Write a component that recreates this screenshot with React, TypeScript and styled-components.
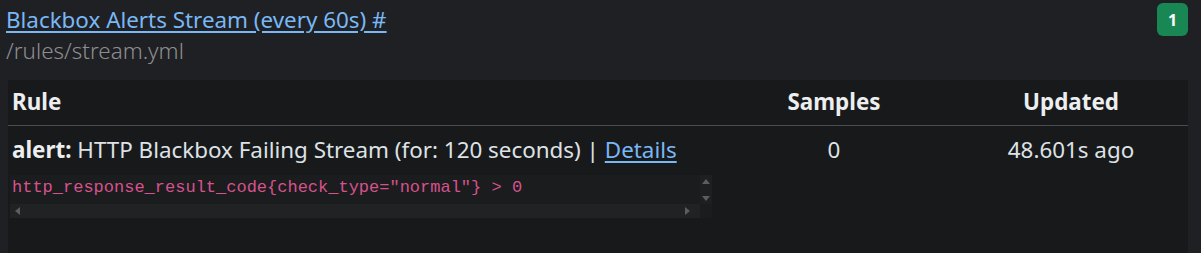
import React from "react";
import styled, { createGlobalStyle } from "styled-components";

const GlobalStyle = createGlobalStyle`
  html, body {
    margin: 0;
    padding: 0;
    background: #1f2023;
    color: #dee2e6;
    font-family: "Noto Sans", "Open Sans", sans-serif;
  }
`;

const Page = styled.div`
  padding: 0 13px 0 6px;
  height: 253px;
  overflow: hidden;
`;

const GroupHeader = styled.div`
  display: flex;
  justify-content: space-between;
  align-items: flex-start;
`;

const TitleBlock = styled.div`
  display: flex;
  flex-direction: column;
  padding-top: 5px;
`;

const TitleLink = styled.a`
  color: #79b8f5;
  font-size: 22.4px;
  line-height: 30px;
  text-decoration: underline;
  text-underline-offset: 3px;
`;

const FilePath = styled.span`
  color: #8d8e90;
  font-size: 22.4px;
  font-weight: 300;
  line-height: 32px;
`;

const Badge = styled.span`
  margin-top: 3px;
  width: 31px;
  height: 33px;
  border-radius: 6px;
  background: #198754;
  color: #fff;
  font-weight: 700;
  font-size: 16px;
  display: flex;
  align-items: center;
  justify-content: center;
`;

const Table = styled.div`
  margin: 13px 0 0 2px;
  background: #18191b;
  min-height: 180px;
`;

const Row = styled.div<{ $head?: boolean }>`
  display: grid;
  grid-template-columns: 706px 240px 1fr;
  border-bottom: ${(p) => (p.$head ? "1px solid #4a4c50" : "none")};
  align-items: start;
`;

const Cell = styled.div<{ $center?: boolean; $head?: boolean }>`
  padding: ${(p) => (p.$head ? "7px 4px 8px" : "9px 4px 6px")};
  text-align: ${(p) => (p.$center ? "center" : "left")};
  font-size: 22.4px;
  line-height: 30px;
  font-weight: ${(p) => (p.$head ? 700 : 400)};
  color: ${(p) => (p.$head ? "#eceef0" : "#dee2e6")};
  white-space: nowrap;
`;

const Strong = styled.strong`
  font-weight: 700;
  color: #eceef0;
`;

const DetailsLink = styled.a`
  color: #79b8f5;
  text-decoration: underline;
  text-underline-offset: 3px;
`;

const ExprBox = styled.div`
  margin: 10px 0 0 -2px;
  width: 702px;
  display: grid;
  grid-template-columns: 1fr 12px;
  grid-template-rows: 29px 14px;
  background: #1b1c1e;
`;

const Expr = styled.pre`
  margin: 0;
  padding: 0 0 0 2px;
  overflow: hidden;
  color: #d6528c;
  font-family: "Liberation Mono", monospace;
  font-size: 17px;
  line-height: 26px;
  white-space: pre;
`;

const VScroll = styled.div`
  display: flex;
  flex-direction: column;
  align-items: center;
  justify-content: space-between;
  padding: 4px 0 3px;
  background: #1e1f21;
`;

const HScroll = styled.div`
  display: flex;
  align-items: center;
  justify-content: space-between;
  padding: 0 10px 0 5px;
  background: #212224;
`;

const Corner = styled.div`
  background: #1b1c1e;
`;

const Arrow = styled.span<{ $dir: "up" | "down" | "left" | "right" }>`
  width: 0;
  height: 0;
  border: 4px solid transparent;
  ${(p) =>
    p.$dir === "up"
      ? "border-bottom: 5px solid #5c5d60; border-top-width: 0;"
      : p.$dir === "down"
      ? "border-top: 5px solid #5c5d60; border-bottom-width: 0;"
      : p.$dir === "left"
      ? "border-right: 5px solid #5c5d60; border-left-width: 0;"
      : "border-left: 5px solid #5c5d60; border-right-width: 0;"}
`;

export default function App() {
  return (
    <>
      <GlobalStyle />
      <Page>
        <GroupHeader>
          <TitleBlock>
            <TitleLink href="#">Blackbox Alerts Stream (every 60s) #</TitleLink>
            <FilePath>/rules/stream.yml</FilePath>
          </TitleBlock>
          <Badge>1</Badge>
        </GroupHeader>
        <Table>
          <Row $head>
            <Cell $head>Rule</Cell>
            <Cell $head $center>Samples</Cell>
            <Cell $head $center>Updated</Cell>
          </Row>
          <Row>
            <Cell>
              <Strong>alert:</Strong> HTTP Blackbox Failing Stream (for: 120 seconds) |{" "}
              <DetailsLink href="#">Details</DetailsLink>
              <ExprBox>
                <Expr>{'http_response_result_code{check_type="normal"} > 0'}</Expr>
                <VScroll>
                  <Arrow $dir="up" />
                  <Arrow $dir="down" />
                </VScroll>
                <HScroll>
                  <Arrow $dir="left" />
                  <Arrow $dir="right" />
                </HScroll>
                <Corner />
              </ExprBox>
            </Cell>
            <Cell $center>0</Cell>
            <Cell $center>48.601s ago</Cell>
          </Row>
        </Table>
      </Page>
    </>
  );
}
